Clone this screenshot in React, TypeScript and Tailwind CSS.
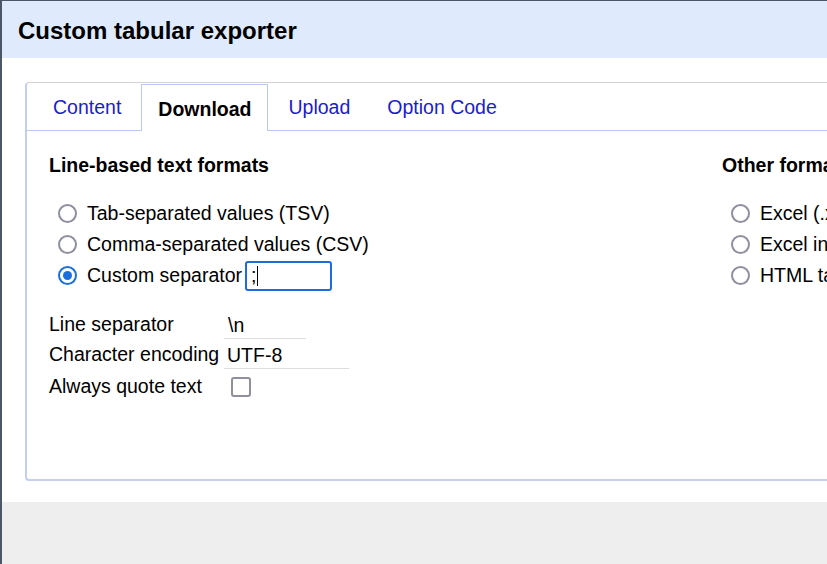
import React from "react";

function Radio({ checked }: { checked?: boolean }) {
  return checked ? (
    <span className="w-[19px] h-[19px] rounded-full border-2 border-[#1a6fdf] flex items-center justify-center shrink-0">
      <span className="w-[9px] h-[9px] rounded-full bg-[#1a6fdf]" />
    </span>
  ) : (
    <span className="w-[19px] h-[19px] rounded-full border-2 border-[#8f8f9d] shrink-0" />
  );
}

function RadioRow({ label, checked, children }: { label: string; checked?: boolean; children?: React.ReactNode }) {
  return (
    <div className="h-[31px] flex items-center pl-[9px]">
      <Radio checked={checked} />
      <span className="ml-[10px] whitespace-nowrap">{label}</span>
      {children}
    </div>
  );
}

export default function App() {
  const tabs = ["Content", "Download", "Upload", "Option Code"];
  return (
    <div
      className="w-[827px] h-[564px] overflow-hidden bg-white border-l-2 border-t border-[#4b5667] flex flex-col text-black"
      style={{ fontFamily: '"Liberation Sans", Arial, sans-serif' }}
    >
      <div className="h-[57px] shrink-0 bg-[#dfebfc] flex items-center pl-[16px] pt-[2px] text-[24px] font-bold">
        Custom tabular exporter
      </div>
      <div className="h-[444px] shrink-0 pt-[24px] pl-[23px]">
        <div className="w-[840px] h-[399px] rounded-[4px] border-t border-t-[#d3d3d3] border-l-2 border-b-2 border-l-[#c4cff0] border-b-[#c4cff0] flex flex-col">
          <div className="h-[48px] shrink-0 border-b border-[#b9c9f2] flex items-end pl-[9px] gap-[3px] text-[19.5px]">
            {tabs.map((t) => (
              <div
                key={t}
                className={
                  t === "Download"
                    ? "h-[47px] -mb-px px-[16px] pt-[3px] flex items-center bg-white border border-b-0 border-[#b9c9f2] font-bold text-black"
                    : "h-[47px] px-[17px] pt-[3px] flex items-center text-[#1b1bd0]"
                }
              >
                {t}
              </div>
            ))}
          </div>
          <div className="flex pl-[22px] pt-[23px] text-[19.5px]">
            <div className="w-[673px] shrink-0">
              <div className="font-bold h-[24px] flex items-center whitespace-nowrap">Line-based text formats</div>
              <div className="mt-[20px]">
                <RadioRow label="Tab-separated values (TSV)" />
                <RadioRow label="Comma-separated values (CSV)" />
                <RadioRow label="Custom separator" checked>
                  <div className="ml-[3px] w-[87px] h-[30px] border-2 border-[#1c6cdc] rounded-[3px] flex items-center pl-[4px]">
                    <span>;</span>
                    <span className="w-px h-[20px] bg-black ml-[1px]" />
                  </div>
                </RadioRow>
              </div>
              <div className="mt-[19px]">
                <div className="h-[30px] flex items-center">
                  <span className="w-[175px] whitespace-nowrap">Line separator</span>
                  <div className="w-[82px] h-[26px] mt-[2px] border-b border-[#dddddd] flex items-center pl-[4px]">\n</div>
                </div>
                <div className="h-[30px] flex items-center">
                  <span className="w-[175px] whitespace-nowrap">Character encoding</span>
                  <div className="w-[125px] h-[26px] mt-[2px] border-b border-[#dddddd] flex items-center pl-[3px]">UTF-8</div>
                </div>
                <div className="h-[34px] flex items-center">
                  <span className="w-[182px] whitespace-nowrap">Always quote text</span>
                  <span className="w-[20px] h-[20px] border-2 border-[#8f8f9d] rounded-[3px]" />
                </div>
              </div>
            </div>
            <div className="flex-1">
              <div className="font-bold h-[24px] flex items-center whitespace-nowrap">Other formats</div>
              <div className="mt-[20px]">
                <RadioRow label="Excel (.xls)" />
                <RadioRow label="Excel in XML (.xlsx)" />
                <RadioRow label="HTML table" />
              </div>
            </div>
          </div>
        </div>
      </div>
      <div className="flex-1 bg-[#eeeeee]" />
    </div>
  );
}
